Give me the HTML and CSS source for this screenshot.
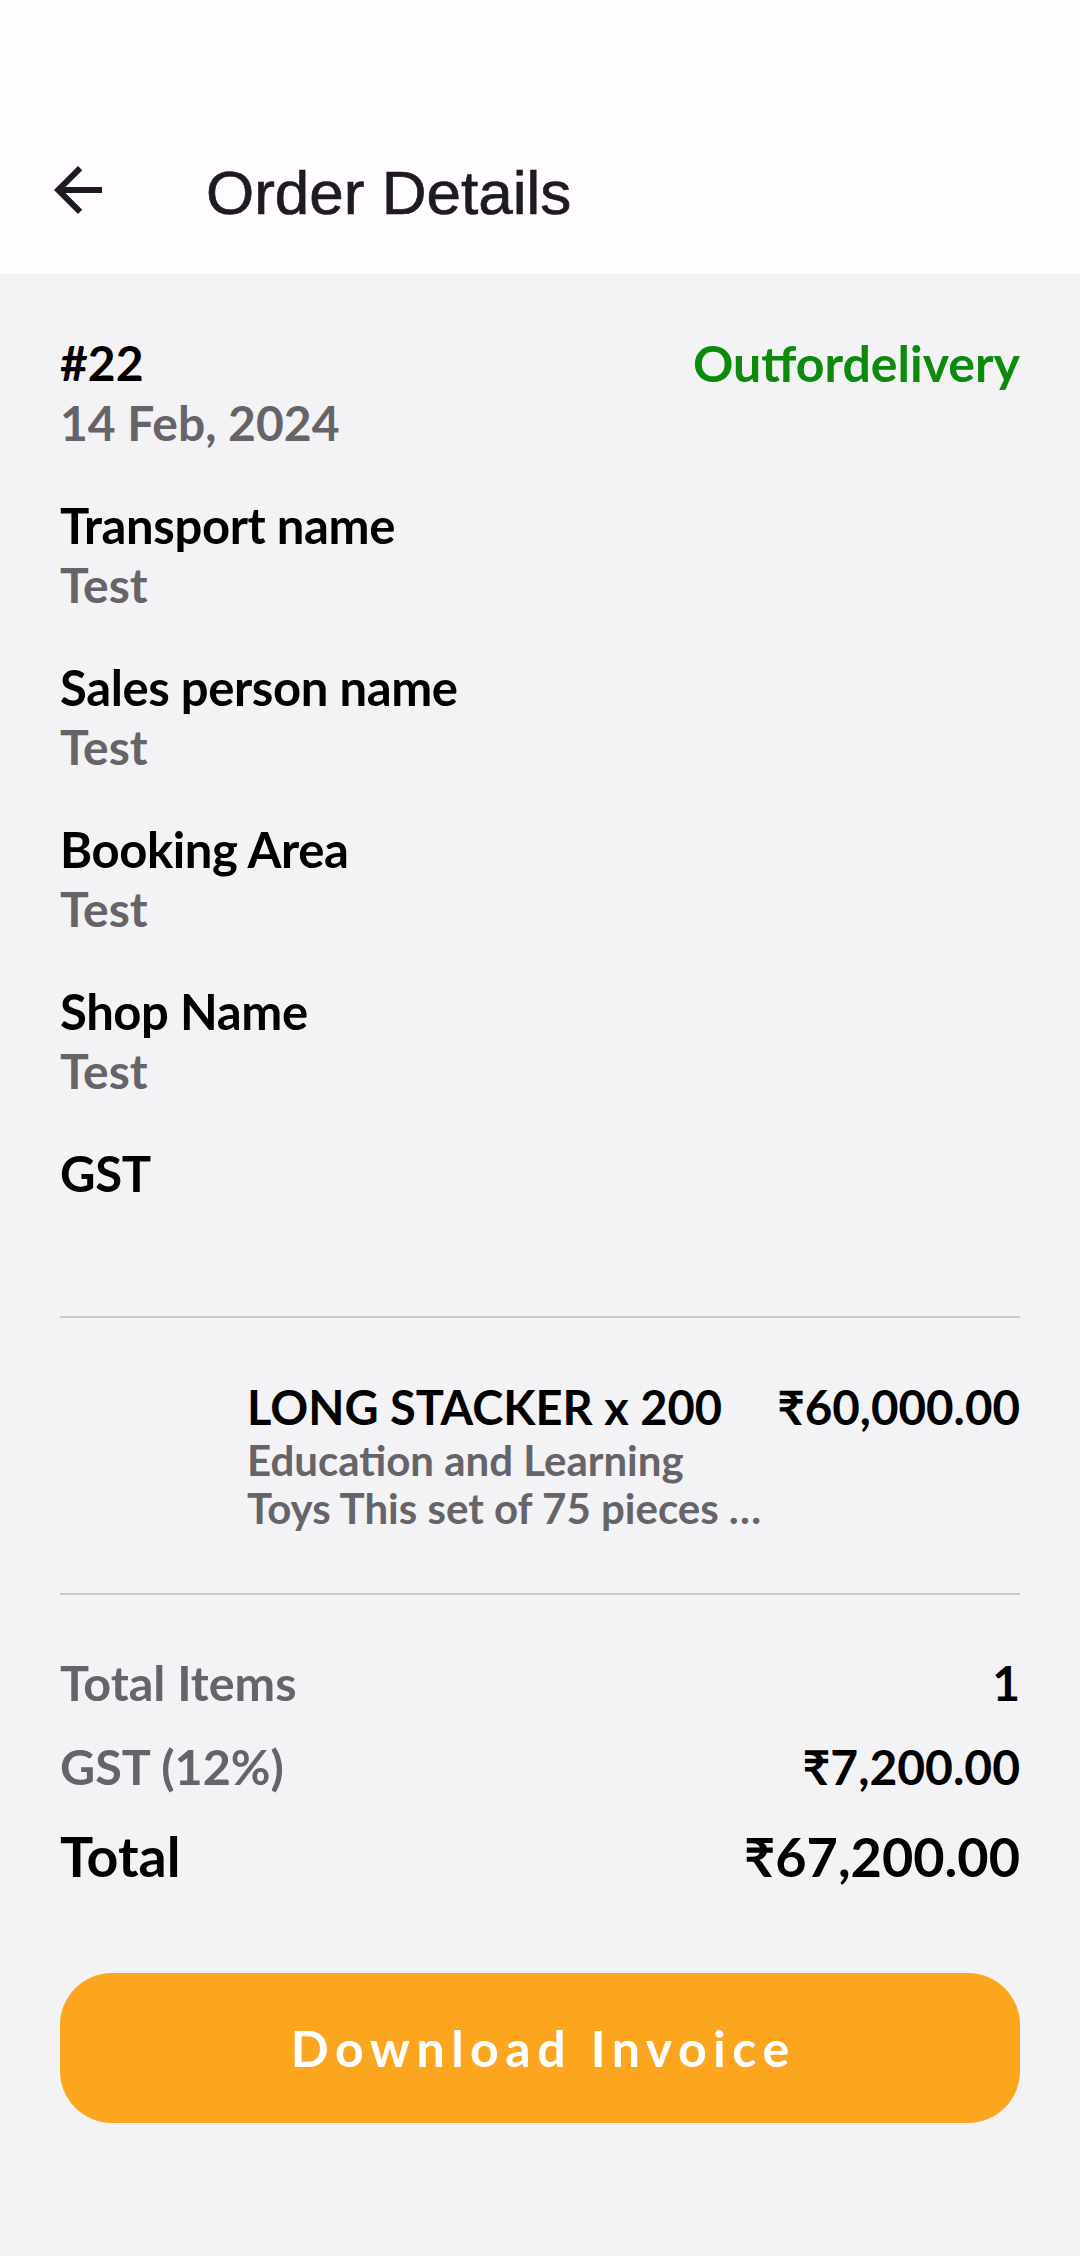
FILE: index.html
```html
<!DOCTYPE html>
<html lang="en">
<head>
<meta charset="utf-8">
<title>Order Details</title>
<link rel="stylesheet" href="styles.css">
</head>
<body>
<div class="screen">
  <header class="appbar">
    <div class="toolbar">
      <button class="back" aria-label="Back">
        <svg viewBox="0 0 24 24" width="72" height="72"><path d="M20 11H7.83l5.59-5.59L12 4l-8 8 8 8 1.41-1.41L7.83 13H20v-2z" fill="#1c1b1f"/></svg>
      </button>
      <h1 class="title">Order Details</h1>
    </div>
  </header>

  <main class="content">
    <div class="order-head">
      <div>
        <div class="order-no">#22</div>
        <div class="value">14 Feb, 2024</div>
      </div>
      <div class="status">Outfordelivery</div>
    </div>

    <div class="field">
      <div class="label">Transport name</div>
      <div class="value">Test</div>
    </div>
    <div class="field">
      <div class="label">Sales person name</div>
      <div class="value">Test</div>
    </div>
    <div class="field">
      <div class="label">Booking Area</div>
      <div class="value">Test</div>
    </div>
    <div class="field">
      <div class="label">Shop Name</div>
      <div class="value">Test</div>
    </div>
    <div class="field">
      <div class="label">GST</div>
      <div class="value"></div>
    </div>

    <hr class="divider divider-top">

    <div class="item">
      <div class="item-thumb"></div>
      <div class="item-info">
        <div class="item-name">LONG STACKER x 200</div>
        <div class="item-desc">Education and Learning Toys This set of 75 pieces …</div>
      </div>
      <div class="item-price">₹60,000.00</div>
    </div>

    <hr class="divider divider-bottom">

    <div class="summary">
      <div class="sum-row">
        <span class="sum-label">Total Items</span>
        <span class="sum-value">1</span>
      </div>
      <div class="sum-row">
        <span class="sum-label">GST (12%)</span>
        <span class="sum-value">₹7,200.00</span>
      </div>
      <div class="sum-row total">
        <span class="sum-label">Total</span>
        <span class="sum-value">₹67,200.00</span>
      </div>
    </div>

    <button class="download">Download Invoice</button>
  </main>
</div>
</body>
</html>
```

FILE: styles.css
```css
* { box-sizing: border-box; }

html, body {
  margin: 0;
  padding: 0;
  background: #f3f2f5;
}

body {
  width: 1080px;
  min-height: 2256px;
  font-family: "Lato", "Noto Sans", sans-serif;
  -webkit-font-smoothing: antialiased;
}

.screen {
  min-height: 2256px;
  background: #f3f2f5;
}

.appbar {
  background: #fffbfe;
  height: 274px;
  display: flex;
  flex-direction: column;
  justify-content: flex-end;
}

.toolbar {
  height: 168px;
  display: flex;
  align-items: center;
  padding-left: 42px;
}

.back {
  width: 72px;
  height: 72px;
  padding: 0;
  border: 0;
  background: none;
  display: flex;
}

.title {
  margin: 4px 0 0 92px;
  font-family: "Liberation Sans", Arial, sans-serif;
  font-weight: 400;
  font-size: 62px;
  color: #1c1b1f;
  -webkit-text-stroke: 0.7px #1c1b1f;
}

.content {
  padding: 59px 60px 0;
}

.order-head {
  display: flex;
  justify-content: space-between;
  align-items: flex-start;
}

.order-no {
  font-weight: 700;
  font-size: 48px;
  line-height: 60px;
  color: #000;
}

.status {
  font-weight: 700;
  font-size: 50px;
  line-height: 60px;
  color: #0b8a0b;
}

.field {
  margin-top: 42px;
}

.label {
  font-weight: 700;
  font-size: 49px;
  line-height: 60px;
  letter-spacing: -0.4px;
  color: #000;
}

.value {
  font-weight: 700;
  font-size: 48px;
  line-height: 60px;
  height: 60px;
  color: #666468;
}

.divider {
  border: 0;
  height: 2px;
  background: #c9c8cc;
  margin: 0;
}

.divider-top {
  margin-top: 53px;
}

.item {
  display: flex;
  align-items: flex-start;
  padding: 61px 0 61px;
}

.item-thumb {
  width: 160px;
  height: 150px;
  margin-right: 27px;
  flex: none;
}

.item-info {
  flex: 1;
  min-width: 0;
  padding-right: 4px;
}

.item-name {
  font-weight: 700;
  font-size: 47px;
  line-height: 56px;
  color: #000;
  white-space: nowrap;
}

.item-desc {
  font-weight: 700;
  font-size: 42px;
  line-height: 48px;
  margin-top: 1px;
  color: #666468;
}

.item-price {
  flex: none;
  font-weight: 700;
  font-size: 47.5px;
  line-height: 56px;
  color: #000;
}

.summary {
  padding-top: 57px;
  display: flex;
  flex-direction: column;
  gap: 23px;
}

.sum-row {
  display: flex;
  justify-content: space-between;
  align-items: baseline;
  font-size: 48px;
  line-height: 60px;
  font-weight: 700;
}

.sum-label {
  font-size: 48.5px;
  color: #666468;
}

.sum-value {
  color: #000;
}

.sum-row.total {
  font-size: 54px;
  line-height: 66px;
  margin-top: 3px;
}

.sum-row.total .sum-label {
  font-size: 55.5px;
  color: #000;
}

.download {
  display: block;
  width: 100%;
  height: 150px;
  margin-top: 83px;
  border: 0;
  border-radius: 52px;
  background: #fca61f;
  color: #fff;
  font-family: "Lato", "Noto Sans", sans-serif;
  font-weight: 700;
  font-size: 50px;
  letter-spacing: 6.5px;
  text-indent: 6.5px;
}
```
